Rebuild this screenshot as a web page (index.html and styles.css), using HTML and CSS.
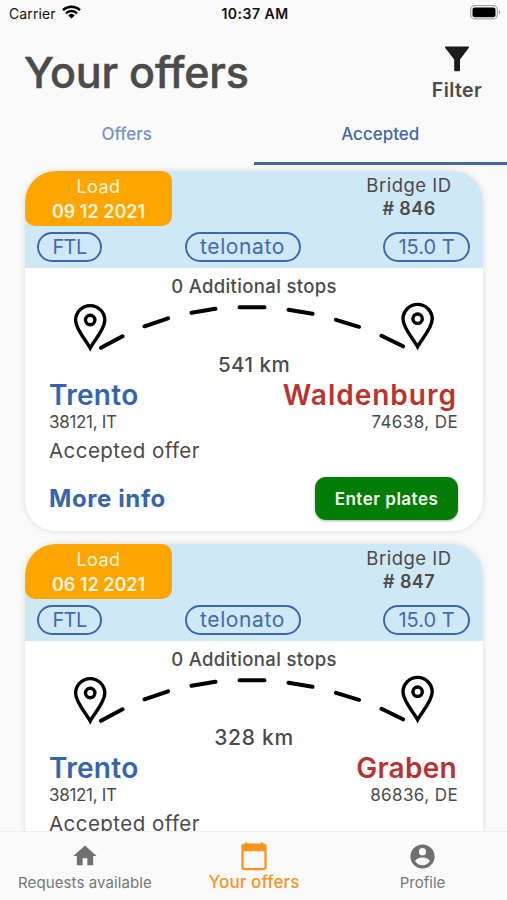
FILE: index.html
```html
<!DOCTYPE html>
<html lang="en">
<head>
<meta charset="utf-8">
<meta name="viewport" content="width=device-width, initial-scale=1">
<title>Your offers</title>
<link rel="stylesheet" href="styles.css">
</head>
<body>
<div class="app">
  <div class="status">
    <div class="carrier"><span>Carrier</span>
      <svg width="19" height="14" viewBox="0 0 19 14" fill="none" stroke="#000" stroke-width="2.5"><path d="M1 5.1a12.3 12.3 0 0 1 17 0M4 8.3a8 8 0 0 1 11 0"/><path d="M9.5 13.4 6.2 10.4a4.8 4.8 0 0 1 6.6 0z" fill="#000" stroke="none"/></svg>
    </div>
    <span class="clock">10:37 AM</span>
    <svg class="battery" width="31" height="15" viewBox="0 0 31 15"><rect x=".7" y=".7" width="26.6" height="13.2" rx="4" fill="#fff" stroke="#aaa" stroke-width="1.3"/><rect x="2.5" y="2.5" width="23" height="9.8" rx="2" fill="#000"/><path d="M28.8 5v4.6q1.5-.6 1.5-2.3T28.800 5z" fill="#aaa"/></svg>
  </div>
  <header class="top">
    <h1 class="title">Your offers</h1>
    <div class="filter">
      <svg width="26" height="26" viewBox="0 0 26 26"><path d="M1.700.5h22.600q1.100 0 .6 1.300L16 13.400v10.800q0 1-1 1h-3.800q-1 0-1-1V13.400L1.100 1.800Q.6.5 1.700.5z" fill="#1b1b1b"/></svg>
      <span class="filter-label">Filter</span>
    </div>
  </header>
  <nav class="tabs">
    <span class="tab">Offers</span>
    <span class="tab tab-active">Accepted</span>
  </nav>
  <main class="list">
    <article class="card">
      <div class="card-head">
        <div class="head-row">
          <div class="load"><span class="load-label">Load</span><span class="load-date">09 12 2021</span></div>
          <div class="bridge"><span class="bridge-label">Bridge ID</span><span class="bridge-id"># 846</span></div>
        </div>
        <div class="pills"><span class="pill ftl">FTL</span><span class="pill telonato">telonato</span><span class="pill weight">15.0 T</span></div>
      </div>
      <div class="stops">0 Additional stops</div>
      <svg class="route" width="458" height="56" viewBox="0 2.700 458 56" fill="none" stroke="#000">
        <path d="M65.200 48.700C61.500 41.500 50.600 30 50.600 20.900a14.600 14.600 0 0 1 29.200 0C79.800 30 68.900 41.500 65.200 48.700z" stroke-width="3.400"/>
        <circle cx="65.200" cy="20.700" r="4.700" stroke-width="3.400"/>
        <path d="M392.600 47.500C388.900 40.300 378 28.800 378 19.700a14.600 14.600 0 0 1 29.200 0C407.200 28.800 396.300 40.300 392.600 47.500z" stroke-width="3.400"/>
        <circle cx="392.600" cy="19.400" r="4.700" stroke-width="3.400"/>
        <path d="M76 48.500 97.500 37M119.500 27 143 19M166.500 13.500 190.500 9.500M214.500 8H239.500M263.500 10.500 287.500 14.500M311 20.500 334 27.500M356.500 36.500 378 47" stroke-width="4" stroke-linecap="round"/>
      </svg>
      <div class="km">541 km</div>
      <div class="cities"><span class="from">Trento</span><span class="to waldenburg">Waldenburg</span></div>
      <div class="zips"><span class="zip-it">38121, IT</span><span class="zip-de">74638, DE</span></div>
      <div class="state">Accepted offer</div>
      <div class="actions"><span class="more">More info</span><button class="enter">Enter plates</button></div>
    </article>
    <article class="card">
      <div class="card-head">
        <div class="head-row">
          <div class="load"><span class="load-label">Load</span><span class="load-date">06 12 2021</span></div>
          <div class="bridge"><span class="bridge-label">Bridge ID</span><span class="bridge-id"># 847</span></div>
        </div>
        <div class="pills"><span class="pill ftl">FTL</span><span class="pill telonato">telonato</span><span class="pill weight">15.0 T</span></div>
      </div>
      <div class="stops">0 Additional stops</div>
      <svg class="route" width="458" height="56" viewBox="0 2.700 458 56" fill="none" stroke="#000">
        <path d="M65.200 48.700C61.500 41.500 50.600 30 50.600 20.900a14.600 14.600 0 0 1 29.200 0C79.800 30 68.900 41.500 65.200 48.700z" stroke-width="3.400"/>
        <circle cx="65.200" cy="20.700" r="4.700" stroke-width="3.400"/>
        <path d="M392.600 47.500C388.900 40.300 378 28.800 378 19.700a14.600 14.600 0 0 1 29.200 0C407.200 28.800 396.300 40.300 392.600 47.500z" stroke-width="3.400"/>
        <circle cx="392.600" cy="19.400" r="4.700" stroke-width="3.400"/>
        <path d="M76 48.500 97.500 37M119.500 27 143 19M166.500 13.500 190.500 9.500M214.500 8H239.500M263.500 10.500 287.500 14.500M311 20.500 334 27.500M356.500 36.500 378 47" stroke-width="4" stroke-linecap="round"/>
      </svg>
      <div class="km km-wide">328 km</div>
      <div class="cities"><span class="from">Trento</span><span class="to graben">Graben</span></div>
      <div class="zips"><span class="zip-it">38121, IT</span><span class="zip-de">86836, DE</span></div>
      <div class="state">Accepted offer</div>
    </article>
  </main>
  <footer class="bottom">
    <div class="item"><svg width="28" height="28" viewBox="0 0 24 24" fill="#707070"><path d="M10 20v-6h4v6h5v-8h3L12 3 2 12h3v8z"/></svg><span class="item-label requests">Requests available</span></div>
    <div class="item current"><svg width="26" height="29" viewBox="0 0 26 29"><path d="M3.500 2.500h19a2 2 0 0 1 2 2v20.600a2 2 0 0 1-2 2h-19a2 2 0 0 1-2-2V4.500a2 2 0 0 1 2-2z" fill="none" stroke="#f7941d" stroke-width="2.200"/><path d="M1.500 9.300V3.500H4V.5h2.300v2h13.400v-2H22v3h2.500v5.800z" fill="#f7941d"/></svg><span class="item-label yours">Your offers</span></div>
    <div class="item"><svg width="29" height="29" viewBox="0 0 24 24" fill="#707070"><path d="M12 2a10 10 0 1 0 0 20 10 10 0 0 0 0-20zm0 3a3 3 0 1 1 0 6 3 3 0 0 1 0-6zm0 14.200a7.200 7.200 0 0 1-6-3.220c.03-1.990 4-3.080 6-3.080s5.970 1.090 6 3.080a7.200 7.200 0 0 1-6 3.220z"/></svg><span class="item-label profile">Profile</span></div>
  </footer>
</div>
</body>
</html>
```
FILE: styles.css
```css
* { box-sizing: border-box; }
body { margin: 0; background: #fafafa; color: #4b4b4b; font-family: Inter, sans-serif; white-space: nowrap; }
.app { width: 507px; height: 900px; display: flex; flex-direction: column; overflow: hidden; }
.status { height: 28px; flex: none; display: grid; grid-template-columns: 1fr auto 1fr; padding: 0 6px 2px 9px; align-items: center; color: #111; }
.carrier { display: flex; align-items: center; gap: 6px; font-size: 14px; letter-spacing: 0.1px; }
.carrier svg { margin-top: -2px; }
.clock { font-size: 14px; font-weight: 600; letter-spacing: 0.5px; }
.battery { justify-self: end; margin-top: -1px; }
.top { height: 80px; flex: none; display: flex; justify-content: space-between; padding: 18px 24px 0 24px; }
.title { margin: -1px 0 0; font-size: 43px; line-height: 54px; font-weight: 500; letter-spacing: -0.2px; -webkit-text-stroke: 0.5px #4b4b4b; }
.filter { display: flex; flex-direction: column; align-items: center; width: 52px; }
.filter-label { font-size: 19.5px; line-height: 24px; margin-top: 6px; font-weight: 600; letter-spacing: 0.4px; }
.tabs { height: 57px; flex: none; display: grid; grid-template-columns: 1fr 1fr; text-align: center; font-size: 17px; font-weight: 500; line-height: 52px; color: #7892c4; }
.tab-active { color: #4468a8; border-bottom: 3px solid #416b9f; }
.list { flex: 1; min-height: 0; overflow: hidden; display: flex; flex-direction: column; gap: 13px; padding: 6px 24px 0 25px; }
.card { flex: none; height: 360px; background: #fff; border-radius: 31px; overflow: hidden; box-shadow: 0 0 6px rgba(0,0,0,.13); }
.card-head { height: 97px; background: #cee8f6; }
.head-row { display: flex; justify-content: space-between; height: 55px; }
.load { width: 147px; height: 55px; border-radius: 30px 10px 10px; background: #ffa500; color: #fff6df; display: flex; flex-direction: column; align-items: center; padding-top: 3px; font-size: 18px; line-height: 25px; }
.load-label { letter-spacing: 0.4px; }
.load-date { font-weight: 600; }
.bridge { width: 148px; display: flex; flex-direction: column; align-items: center; padding-top: 2px; font-size: 18px; line-height: 24px; }
.bridge-label { font-size: 18.5px; letter-spacing: 0.5px; }
.bridge-id { font-weight: 600; letter-spacing: 0.4px; }
.pills { display: grid; grid-template-columns: 65px 116px 87px; justify-content: space-between; padding: 6px 13px 0 12px; }
.pill { height: 30px; border: 2px solid #3b67ad; border-radius: 15px; color: #426bad; font-size: 20px; line-height: 26px; text-align: center; }
.ftl { letter-spacing: -0.6px; }
.telonato { font-size: 21px; letter-spacing: 0.6px; }
.stops { height: 34px; text-align: center; font-size: 18.5px; line-height: 37px; font-weight: 500; letter-spacing: 0.35px; }
.route { display: block; }
.km { height: 24px; margin-top: -6px; text-align: center; font-size: 20.5px; line-height: 25px; font-weight: 500; letter-spacing: 0.5px; }
.km-wide { font-size: 21px; letter-spacing: 0.7px; }
.cities { display: flex; justify-content: space-between; height: 36px; padding: 0 26px 0 24px; font-size: 28px; line-height: 39px; font-weight: 600; letter-spacing: 0.3px; color: #3565ac; }
.to { color: #b93430; }
.waldenburg { letter-spacing: 1px; }
.zips { display: flex; justify-content: space-between; height: 22px; padding: 0 25px 0 24px; font-size: 17px; line-height: 21px; }
.zip-it { letter-spacing: -0.3px; }
.zip-de { letter-spacing: 0.4px; }
.state { padding: 0 24px; font-size: 20.5px; line-height: 34px; height: 43px; letter-spacing: 0.45px; }
.actions { display: flex; justify-content: space-between; padding: 0 25px 0 24px; font-size: 24px; line-height: 44px; font-weight: 700; letter-spacing: 0.6px; color: #3565ac; }
.enter { width: 143px; height: 43px; border: 0; border-radius: 11px; background: #047d08; color: #f5fff2; padding: 2px 0 0; font: 600 17px/41px Inter, sans-serif; letter-spacing: 0.5px; box-shadow: 0 1px 3px rgba(0,0,0,.3); }
.bottom { height: 69px; flex: none; display: grid; grid-template-columns: 170px 1fr 169px; border-top: 1px solid #efefef; background: #fafafa; }
.item { display: flex; flex-direction: column; align-items: center; padding-top: 10px; color: #777; font-size: 15px; }
.item-label { line-height: 20px; margin-top: 3px; }
.requests { letter-spacing: 0.1px; }
.profile { margin-top: 2px; }
.current { color: #f7941d; padding-top: 10px; font-size: 17px; font-weight: 500; }
.current .item-label { margin-top: 1px; letter-spacing: 0.1px; }
```
